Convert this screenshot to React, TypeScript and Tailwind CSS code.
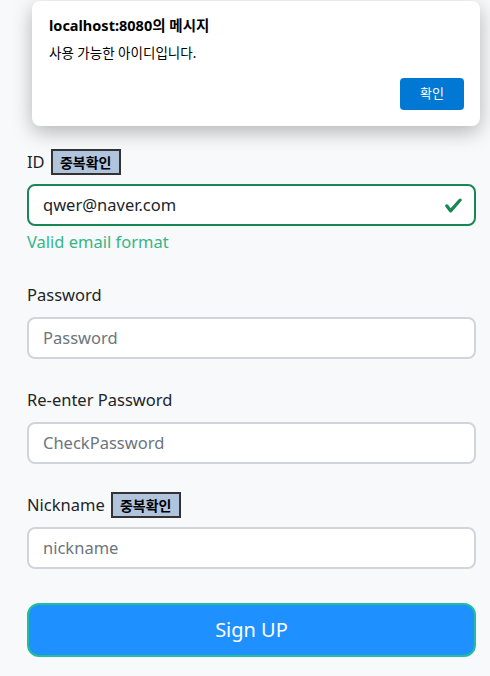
import React from "react";

const font = { fontFamily: '"Noto Sans", "Noto Sans CJK KR", sans-serif' };

function Badge() {
  return (
    <span
      className="inline-flex items-center justify-center h-[26px] w-[70px] bg-[#b0c4de] border-2 border-[#333] text-[14px] font-bold text-black leading-none"
      style={{ fontFamily: '"Noto Sans CJK KR", sans-serif' }}
    >
      중복확인
    </span>
  );
}

function Field({ label, placeholder, badge }: { label: string; placeholder: string; badge?: boolean }) {
  return (
    <div className="flex flex-col">
      <div className="flex items-center gap-[6px] h-[24px] text-[16.5px] text-[#212529]">
        <span>{label}</span>
        {badge && <Badge />}
      </div>
      <div className="mt-[10px] h-[42px] rounded-[8px] border-2 border-[#d1d5db] bg-white flex items-center px-[14px] text-[16.5px] text-[#6c757d]">
        {placeholder}
      </div>
    </div>
  );
}

export default function App() {
  return (
    <div className="relative w-[490px] h-[676px] bg-[#f8f9fa] overflow-hidden" style={font}>
      <div className="flex flex-col pl-[27px] pr-[14px] pt-[150px]">
        <div className="flex flex-col">
          <div className="flex items-center gap-[6px] h-[24px] text-[16.5px] text-[#212529]">
            <span>ID</span>
            <Badge />
          </div>
          <div className="mt-[10px] h-[42px] rounded-[8px] border-2 border-[#198754] bg-white flex items-center justify-between pl-[14px] pr-[11px] text-[16.5px] text-[#212529]">
            <span>qwer@naver.com</span>
            <svg width="19" height="19" viewBox="0 0 8 8">
              <path
                fill="#198754"
                d="M2.3 6.73.6 4.53c-.4-1.04.46-1.4 1.1-.8l1.1 1.4 3.4-3.8c.6-.63 1.6-.27 1.2.7l-4 4.6c-.43.5-.8.4-1.1.1z"
              />
            </svg>
          </div>
          <div className="mt-[4px] h-[24px] leading-[24px] text-[16.5px] text-[#35b586]">Valid email format</div>
        </div>
        <div className="mt-[29px] flex flex-col gap-[29px]">
          <Field label="Password" placeholder="Password" />
          <Field label="Re-enter Password" placeholder="CheckPassword" />
          <Field label="Nickname" placeholder="nickname" badge />
        </div>
        <button className="mt-[34px] h-[54px] rounded-[12px] border-2 border-[#1fbf9a] bg-[#1e90ff] text-white text-[20px] flex items-center justify-center">
          Sign UP
        </button>
      </div>

      <div
        className="absolute left-[32px] top-[1px] w-[448px] h-[125px] bg-white rounded-[8px] shadow-[0_6px_20px_rgba(0,0,0,0.28)] flex flex-col pl-[17px] pr-[16px]"
        style={{ fontFamily: '"Noto Sans", "Noto Sans CJK KR", sans-serif' }}
      >
        <div className="mt-[14px] text-[14.5px] font-bold text-black leading-[20px]">localhost:8080의 메시지</div>
        <div className="mt-[8px] text-[13.5px] text-black leading-[20px]">사용 가능한 아이디입니다.</div>
        <div className="flex justify-end mt-[15px]">
          <div className="w-[64px] h-[32px] rounded-[4px] bg-[#0078d4] text-white text-[13px] flex items-center justify-center">
            확인
          </div>
        </div>
      </div>
    </div>
  );
}
